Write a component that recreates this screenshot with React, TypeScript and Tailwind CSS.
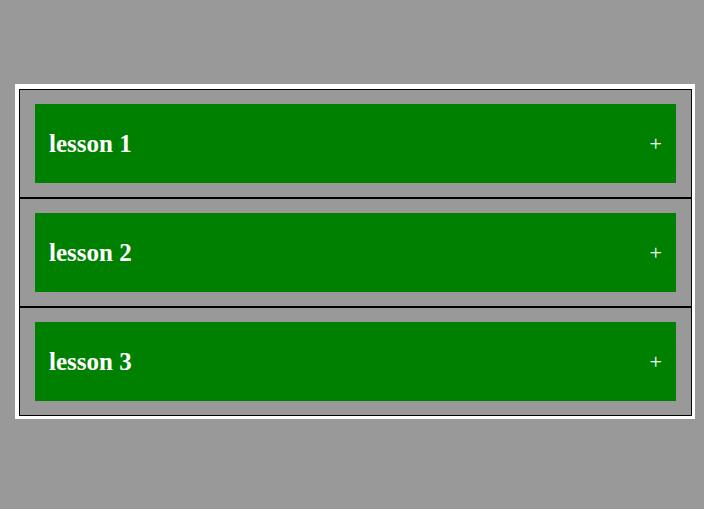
const lessons = ["lesson 1", "lesson 2", "lesson 3"];

export default function App() {
  return (
    <div className="min-h-[509px] w-full bg-[#999999] pt-[84px] font-['Liberation_Serif',serif]">
      <div className="ml-[15px] w-[680px] border-l-4 border-t-[5px] border-r-[3px] border-b-[3px] border-white">
        {lessons.map((title) => (
          <div
            key={title}
            className="border border-black bg-[#999999] px-[15px] py-[14px]"
          >
            <div className="flex h-[79px] items-center justify-between bg-[#008000] px-[14px] text-white">
              <span className="text-[25px] font-bold">{title}</span>
              <span className="text-[22px]">+</span>
            </div>
          </div>
        ))}
      </div>
    </div>
  );
}
